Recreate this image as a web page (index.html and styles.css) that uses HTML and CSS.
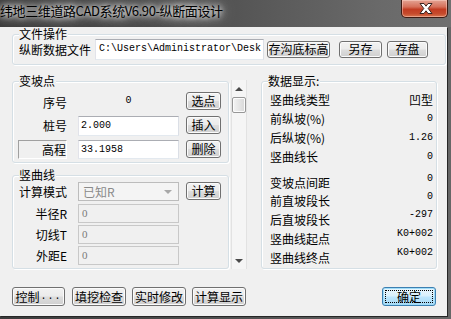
FILE: index.html
```html
<!DOCTYPE html>
<html lang="zh">
<head>
<meta charset="utf-8">
<link rel="stylesheet" href="styles.css">
</head>
<body>
<div class="win">
  <div class="titlebar">
    <span class="title">纬地三维道路CAD系统V6.90-纵断面设计</span>
    <div class="close">
      <svg width="14" height="11" viewBox="0 0 14 11"><polygon points="1,0.5 5,0.5 7,3.2 9,0.5 13,0.5 9.2,5.5 13,10.5 9,10.5 7,7.8 5,10.5 1,10.5 4.8,5.5" fill="#fff" stroke="#3b2520" stroke-width="1" stroke-linejoin="round"/></svg>
    </div>
  </div>
  <div class="client">
    <div class="group g-file">
      <span class="gt">文件操作</span>
      <div class="file-row">
        <span class="lbl">纵断数据文件</span>
        <div class="tb mono file-tb">C:\Users\Administrator\Desk</div>
        <button class="btn b-gdbg">存沟底标高</button>
        <button class="btn b-lc">另存</button>
        <button class="btn b-cp">存盘</button>
      </div>
    </div>
    <div class="mid">
      <div class="leftcol">
        <div class="group g-bpd">
          <span class="gt">变坡点</span>
          <div class="prow r1">
            <span class="plbl">序号</span>
            <span class="pval center mono">0</span>
            <button class="btn pbtn">选点</button>
          </div>
          <div class="prow r2">
            <span class="plbl">桩号</span>
            <div class="tb pval mono">2.000</div>
            <button class="btn pbtn">插入</button>
          </div>
          <div class="prow r3">
            <span class="plbl sunken">高程</span>
            <div class="tb pval mono">33.1958</div>
            <button class="btn pbtn">删除</button>
          </div>
        </div>
        <div class="group g-sqx">
          <span class="gt">竖曲线</span>
          <div class="prow q1">
            <span class="plbl">计算模式</span>
            <div class="combo pval"><span class="ctext">已知R</span><span class="carrow"></span></div>
            <button class="btn pbtn">计算</button>
          </div>
          <div class="prow q2">
            <span class="plbl">半径R</span>
            <div class="dtb pval">0</div>
          </div>
          <div class="prow q3">
            <span class="plbl">切线T</span>
            <div class="dtb pval">0</div>
          </div>
          <div class="prow q3">
            <span class="plbl">外距E</span>
            <div class="dtb pval">0</div>
          </div>
        </div>
      </div>
      <div class="sb">
        <div class="sbbtn"><span class="tri-up"></span></div>
        <div class="thumb"></div>
        <div class="sbfill"></div>
        <div class="sbbtn"><span class="tri-down"></span></div>
      </div>
      <div class="group g-data">
        <span class="gt">数据显示:</span>
        <div class="drow h18"><span>竖曲线类型</span><span>凹型</span></div>
        <div class="drow h19"><span>前纵坡(%)</span><span class="mono">0</span></div>
        <div class="drow h19"><span>后纵坡(%)</span><span class="mono">1.26</span></div>
        <div class="drow h19"><span>竖曲线长</span><span class="mono">0</span></div>
        <div class="drow h18 sep"><span>变坡点间距</span><span class="mono up">0</span></div>
        <div class="drow h18"><span>前直坡段长</span><span class="mono up">0</span></div>
        <div class="drow h19"><span>后直坡段长</span><span class="mono up">-297</span></div>
        <div class="drow h19"><span>竖曲线起点</span><span class="mono up">K0+002</span></div>
        <div class="drow h19"><span>竖曲线终点</span><span class="mono up">K0+002</span></div>
      </div>
    </div>
    <div class="bottom">
      <button class="btn bb b-kz">控制<span class="mono">...</span></button>
      <button class="btn bb b2">填挖检查</button>
      <button class="btn bb b3">实时修改</button>
      <button class="btn bb b4">计算显示</button>
      <button class="btn bb ok">确定</button>
    </div>
  </div>
</div>
</body>
</html>
```

FILE: styles.css
```css
html, body {
  margin: 0;
  padding: 0;
}
body {
  width: 451px;
  height: 319px;
  overflow: hidden;
  font: 12px/14px "Noto Sans CJK SC", sans-serif;
  color: #000;
  background: #4a4a4a;
}
.win {
  width: 451px;
  height: 319px;
  display: flex;
  flex-direction: column;
  background: linear-gradient(to right, #3b3b3b 0%, #4f4f4f 50%, #666 100%);
}
.titlebar {
  height: 27px;
  flex: none;
  position: relative;
  display: flex;
  align-items: flex-start;
  background: linear-gradient(to right, #3a3a3a 0%, #505050 45%, #6a6a6a 85%, #707070 100%);
}
.title {
  margin-top: 3px;
  font-size: 13px;
  line-height: 15px;
  letter-spacing: -0.4px;
  white-space: nowrap;
  color: #000;
  text-shadow: 0 0 5px #fff, 0 0 10px rgba(255,255,255,0.9), 0 0 16px rgba(255,255,255,0.7);
}
.close {
  position: absolute;
  top: 0;
  right: 3px;
  width: 47px;
  height: 18px;
  box-sizing: border-box;
  border: 1px solid #3d1a12;
  border-top: none;
  border-radius: 0 0 5px 5px;
  background: linear-gradient(#e4a494 0%, #d6705a 40%, #c23c22 55%, #c64a2c 80%, #d8754e 100%);
  box-shadow: inset 0 0 0 1px rgba(255,220,210,0.45);
  display: flex;
  align-items: center;
  justify-content: center;
}
.close svg { display: block; margin-left: 2px; }
.client {
  flex: none;
  width: 447px;
  height: 289px;
  box-sizing: border-box;
  background: #f0f0f0;
  padding: 7px 1px 0 12px;
  display: flex;
  flex-direction: column;
  box-shadow: 1px 1px 0 #262626;
}
.mono {
  font-family: "Liberation Mono", monospace;
  font-size: 10px;
}
.group {
  position: relative;
  box-sizing: border-box;
  border: 1px solid #d5dfe5;
  border-radius: 3px;
  box-shadow: inset 1px 1px 0 #fff, 1px 1px 0 #fff;
}
.gt {
  position: absolute;
  top: -8px;
  left: 6px;
  line-height: 13px;
  padding-right: 1px;
  background: #f0f0f0;
  white-space: nowrap;
}
.g-file {
  height: 31px;
  padding: 4px 0 0 6px;
}
.file-row {
  display: flex;
  align-items: center;
  height: 20px;
}
.lbl { margin-right: 4px; white-space: nowrap; line-height: 13px; }
.tb {
  box-sizing: border-box;
  border: 1px solid;
  border-color: #abadb3 #dbdfe6 #e3e9ef #e2e3ea;
  background: #fff;
  padding-left: 2px;
  white-space: nowrap;
  overflow: hidden;
  display: flex;
  align-items: center;
}
.file-tb {
  width: 169px;
  height: 21px;
  margin-right: 3px;
  padding-left: 3px;
}
.btn {
  box-sizing: border-box;
  margin: 0;
  padding: 0;
  border: 1px solid #707070;
  border-radius: 3px;
  background: linear-gradient(#f2f2f2 0%, #ebebeb 48%, #dddddd 52%, #cfcfcf 100%);
  box-shadow: inset 0 0 0 1px #fbfbfb;
  font: 12px/14px "Noto Sans CJK SC", sans-serif;
  color: #000;
  display: flex;
  align-items: center;
  justify-content: center;
  white-space: nowrap;
  position: relative;
}
.b-gdbg { width: 63px; height: 17px; margin-right: 9px; }
.b-lc { width: 43px; height: 17px; margin-right: 5px; }
.b-cp { width: 41px; height: 17px; }
.mid {
  display: flex;
  margin-top: 16px;
  height: 188px;
}
.leftcol {
  width: 217px;
  display: flex;
  flex-direction: column;
}
.g-bpd {
  height: 82px;
  padding: 10px 0 0 5px;
}
.g-sqx {
  margin-top: 12px;
  height: 94px;
  padding: 6px 0 0 5px;
}
.prow {
  display: flex;
  align-items: center;
}
.plbl {
  box-sizing: border-box;
  width: 49px;
  margin-right: 11px;
  text-align: right;
  white-space: nowrap;
}
.pval {
  box-sizing: border-box;
  width: 101px;
  margin-right: 7px;
}
.center { text-align: center; }
.pbtn { width: 35px; height: 18px; }
.r1 { height: 18px; }
.r1 .plbl { padding-top: 3px; }
.r2 { height: 20px; margin-top: 6px; align-items: flex-start; }
.r2 .tb { height: 20px; }
.r2 .plbl { line-height: 20px; }
.r3 { height: 19px; margin-top: 4px; align-items: flex-start; }
.r3 .tb { height: 19px; }
.sunken {
  height: 19px;
  line-height: 17px;
  border: 1px solid;
  border-color: #a0a0a0 #fff #fff #a0a0a0;
  padding-right: 0;
}
.q1 { height: 19px; }
.q1 .pbtn { height: 18px; align-self: flex-start; }
.q2 { height: 19px; margin-top: 3px; }
.q3 { height: 19px; margin-top: 2px; }
.combo {
  height: 19px;
  border: 1px solid #bcbcbc;
  background: #f4f4f4;
  display: flex;
  align-items: center;
  justify-content: space-between;
  padding: 0 6px 0 4px;
  color: #8a8a8a;
}
.carrow {
  width: 0;
  height: 0;
  border-left: 4px solid transparent;
  border-right: 4px solid transparent;
  border-top: 4px solid #a8a8a8;
}
.dtb {
  height: 19px;
  border: 1px solid #c8c8c8;
  background: #f0f0f0;
  color: #7a7a7a;
  padding-left: 3px;
  font-family: "Liberation Serif", serif;
  font-size: 11px;
  line-height: 17px;
}
.sb {
  box-sizing: border-box;
  margin-left: 2px;
  width: 16px;
  height: 189px;
  margin-top: -1px;
  border-left: 1px solid #e2e2e2;
  border-right: 1px solid #e2e2e2;
  background: #f5f5f5;
  display: flex;
  flex-direction: column;
}
.sbbtn {
  height: 17px;
  display: flex;
  align-items: center;
  justify-content: center;
}
.tri-up {
  width: 0; height: 0;
  border-left: 4px solid transparent;
  border-right: 4px solid transparent;
  border-bottom: 4px solid #4a4a4a;
}
.tri-down {
  width: 0; height: 0;
  border-left: 4px solid transparent;
  border-right: 4px solid transparent;
  border-top: 4px solid #4a4a4a;
}
.thumb {
  height: 16px;
  box-sizing: border-box;
  border: 1px solid #979797;
  border-radius: 2px;
  background: linear-gradient(to right, #f4f4f4, #e6e6e6 50%, #d8d8d8);
  box-shadow: inset 0 0 0 1px #fcfcfc;
}
.sbfill { flex: 1; }
.g-data {
  margin-left: 14px;
  width: 176px;
  height: 188px;
  padding: 9px 3px 0 8px;
}
.drow {
  display: flex;
  justify-content: space-between;
  align-items: center;
  white-space: nowrap;
}
.h18 { height: 18px; }
.h19 { height: 19px; }
.sep { margin-top: 8px; }
.up { align-self: flex-start; line-height: 10px; }
.bottom {
  display: flex;
  margin-top: 18px;
  height: 19px;
}
.bb { height: 19px; }
.b-kz { width: 53px; margin-right: 7px; }
.b-kz .mono { font-size: 10px; letter-spacing: 1px; margin-left: 1px; }
.b2 { width: 54px; margin-right: 6px; }
.b3 { width: 54px; margin-right: 6px; }
.b4 { width: 54px; }
.ok {
  width: 54px;
  margin-left: auto;
  margin-right: 10px;
  border-color: #3c7fb1;
  box-shadow: inset 0 0 0 1px #9fdcf8;
  background: linear-gradient(#eaf6fd 0%, #d9f0fc 48%, #bee6fd 52%, #a7d9f5 100%);
}
.ok::after {
  content: "";
  position: absolute;
  left: 2px; right: 2px; top: 2px; bottom: 2px;
  border: 1px dotted #000;
}
```
